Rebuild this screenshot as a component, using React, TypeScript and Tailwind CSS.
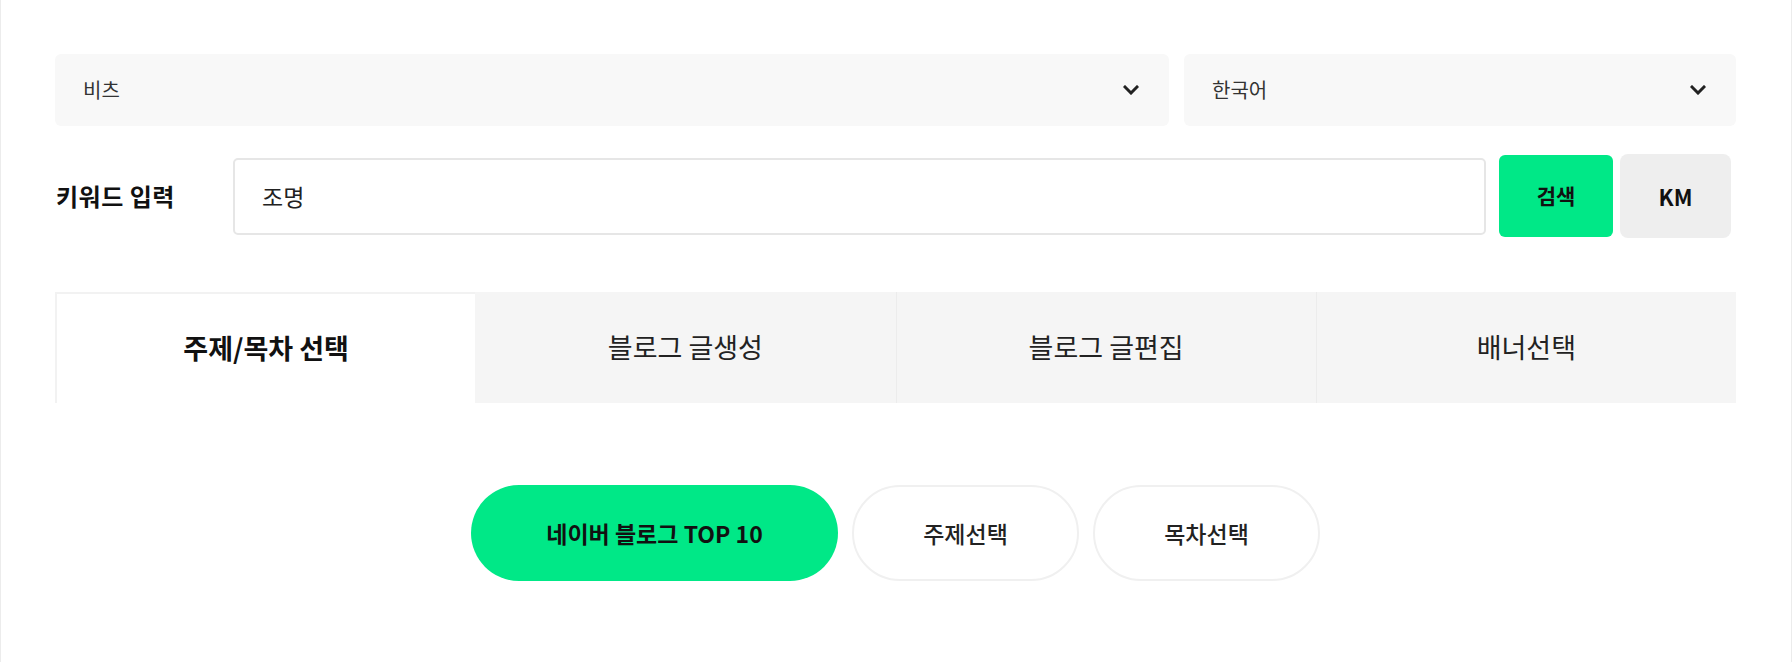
import React, { useState } from 'react';

const FONT = { fontFamily: '"Noto Sans CJK KR", "Noto Sans", sans-serif' };

const tabs = ['주제/목차 선택', '블로그 글생성', '블로그 글편집', '배너선택'];
const steps = [
  { label: '네이버 블로그 TOP 10', width: 'w-[367px]' },
  { label: '주제선택', width: 'w-[227px]' },
  { label: '목차선택', width: 'w-[227px]' },
];

function Chevron() {
  return (
    <svg width="16" height="10" viewBox="0 0 16 10" fill="none" className="shrink-0">
      <path d="M2 2 L8 8 L14 2" stroke="#222" strokeWidth="3" strokeLinecap="square" />
    </svg>
  );
}

function SelectBox({ value }: { value: string }) {
  return (
    <div className="flex h-[72px] items-center justify-between rounded-md bg-[#f8f8f8] pl-[28px] pr-[30px]">
      <span className="text-[20px] text-[#333]">{value}</span>
      <Chevron />
    </div>
  );
}

export default function App() {
  const [activeTab, setActiveTab] = useState(0);
  const [activeStep, setActiveStep] = useState(0);
  const [keyword, setKeyword] = useState('조명');

  return (
    <div style={FONT} className="min-h-[662px] w-full border-x border-[#ececec] bg-white pl-[54px] pr-[55px] pt-[54px]">
      <div className="grid grid-cols-[1114px_1fr] gap-[15px]">
        <SelectBox value="비츠" />
        <SelectBox value="한국어" />
      </div>

      <div className="mt-[28px] flex h-[84px] items-center">
        <div className="w-[178px] pl-[1px] text-[24px] font-bold tracking-[0.5px] text-[#111]">키워드 입력</div>
        <input
          value={keyword}
          onChange={(e) => setKeyword(e.target.value)}
          className="h-[77px] w-[1253px] rounded-[5px] border-2 border-[#e6e6e6] bg-white px-[27px] text-[23px] text-[#222] outline-none"
          style={FONT}
        />
        <button className="ml-[13px] h-[82px] w-[114px] rounded-[6px] bg-[#00e887] text-[21px] font-bold text-[#111]">
          검색
        </button>
        <button className="ml-[7px] h-[84px] w-[111px] rounded-[8px] bg-[#eeeeee] text-[22px] font-bold text-[#111]">
          KM
        </button>
      </div>

      <div className="mt-[54px] grid h-[111px] grid-cols-4">
        {tabs.map((tab, i) => (
          <button
            key={tab}
            onClick={() => setActiveTab(i)}
            className={
              i === activeTab
                ? 'border-l-2 border-t-2 border-[#f2f2f2] bg-white text-[27px] font-bold text-[#111]'
                : `bg-[#f5f5f5] text-[27px] text-[#222] ${i > 1 ? 'border-l border-[#ececec]' : ''}`
            }
          >
            {tab}
          </button>
        ))}
      </div>

      <div className="mt-[82px] flex justify-center gap-[14px]">
        {steps.map((step, i) => (
          <button
            key={step.label}
            onClick={() => setActiveStep(i)}
            className={
              i === activeStep
                ? `h-[96px] ${step.width} rounded-full bg-[#00e887] text-[23px] font-bold text-[#111]`
                : `h-[96px] ${step.width} rounded-full border-2 border-[#f0f0f0] bg-white text-[23px] font-medium text-[#222]`
            }
          >
            {step.label}
          </button>
        ))}
      </div>
    </div>
  );
}
